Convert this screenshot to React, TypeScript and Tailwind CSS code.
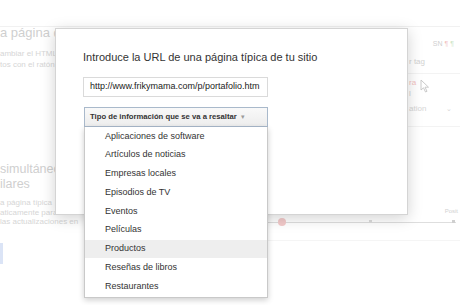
const options = [
  "Aplicaciones de software",
  "Artículos de noticias",
  "Empresas locales",
  "Episodios de TV",
  "Eventos",
  "Películas",
  "Productos",
  "Reseñas de libros",
  "Restaurantes",
];

function Cursor() {
  return (
    <svg width="10" height="14" viewBox="0 0 10 14" className="ml-[4px] mt-[1px]">
      <path d="M1 1 L1 11 L3.5 8.8 L5.5 13 L7 12.3 L5 8.2 L8.5 8.2 Z" fill="#fff" stroke="#c4c4c4" strokeWidth="0.9" />
    </svg>
  );
}

function BackgroundPage() {
  return (
    <div className="flex flex-col h-full">
      <div className="h-[27px] border-b border-[#f1f1f1]" />
      <div className="flex flex-1">
        {/* left column of the page, faded behind the dialog (clipped at the dialog edge) */}
        <div className="w-[268px] shrink-0 flex flex-col whitespace-nowrap">
          <div className="w-[56px] overflow-hidden mt-[-2px] text-[13px] leading-[16px] text-[#cfcfcf]">a página de ejemplo</div>
          <div className="w-[56px] overflow-hidden mt-[7px] text-[8px] leading-[11px] text-[#d6d6d6]">
            <div>ambiar el HTML de la página</div>
            <div>tos con el ratón</div>
          </div>
          <div className="w-[84px] overflow-hidden mt-[92px] text-[12.5px] leading-[15px] text-[#cfcfcf]">
            <div>simultáneo</div>
            <div>ilares</div>
          </div>
          <div className="w-[84px] overflow-hidden mt-[6px] text-[8px] leading-[9.5px] text-[#d6d6d6]">
            <div>a página típica</div>
            <div>aticamente para</div>
            <div>las actualizaciones en</div>
          </div>
          <div className="mt-[16px] w-[3px] h-[21px] bg-[#dbe4f6]" />
        </div>

        {/* right part of the page */}
        <div className="flex-1 flex flex-col whitespace-nowrap">
          <div className="flex justify-end gap-[2px] pr-[6px] mt-[13px] text-[7px] leading-[8px]">
            <span className="text-[#cfcfcf]">SN</span>
            <span className="text-[#f2c4c4]">¶</span>
            <span className="text-[#cfe6c9]">¶</span>
          </div>
          <div className="flex justify-start ml-[141px] mt-[9px] text-[8px] leading-[10px] text-[#d2d2d2]">r tag</div>
          <div className="mt-[6px] border-t border-[#f3f3f3]" />
          <div className="flex ml-[141px] mt-[4px]">
            <span className="text-[8px] leading-[10px] text-[#f2c2c2]">ra</span>
            <Cursor />
          </div>
          <div className="ml-[141px] mt-[-4px] text-[8px] leading-[10px] text-[#d2d2d2]">l</div>
          <div className="flex items-center justify-between ml-[141px] pr-[8px] mt-[5px] text-[8px] leading-[10px] text-[#d6d6d6]">
            <span>ation</span>
            <span className="text-[7px]">⌄</span>
          </div>
          <div className="mt-[12px] border-t border-[#f3f3f3]" />
          <div className="flex justify-end pr-[2px] mt-[81px] text-[6px] leading-[7px] text-[#d2d2d2]">Posit</div>
          <div className="relative mt-[3px] h-[8px] flex items-center">
            <div className="flex-1 h-[1px] bg-[#dedede] mr-[4px]" />
            <div className="absolute left-[10px] top-0 w-[8px] h-[8px] rounded-full bg-[#f3caca]" />
            <div className="absolute left-[101px] top-[2px] w-[3px] h-[3px] bg-[#dcdcdc]" />
            <div className="absolute right-[5px] top-[2px] w-[3px] h-[3px] bg-[#cfcfcf]" />
          </div>
          <div className="mt-[14px] border-t border-[#f5f5f5]" />
        </div>
      </div>
    </div>
  );
}

export default function App() {
  return (
    <div className="relative w-[460px] h-[305px] overflow-hidden bg-white font-['Liberation_Sans',Arial,sans-serif]">
      <BackgroundPage />

      {/* dialog */}
      <div className="absolute left-[55px] top-[28px] w-[353px] h-[187px] bg-white border border-[#d4d4d4] shadow-[0_3px_14px_rgba(0,0,0,0.18)]">
        <div className="pl-[27px] pt-[21px]">
          <div className="text-[11px] leading-[14px] text-[#333] whitespace-nowrap">
            Introduce la URL de una página típica de tu sitio
          </div>
          <div className="mt-[13px] w-[185px] h-[20px] border border-[#dadada] flex items-center pl-[6px] text-[9px] text-[#222] whitespace-nowrap overflow-hidden">
            http://www.frikymama.com/p/portafolio.htm
          </div>
          <div className="relative mt-[10px] ml-[1px] w-[184px]">
            <div className="h-[20px] border border-[#a9b9cb] bg-gradient-to-b from-[#f9f9f9] to-[#ededed] flex items-center pl-[5px] text-[7.7px] font-bold text-[#333] whitespace-nowrap">
              Tipo de información que se va a resaltar
              <span className="ml-[4px] text-[7px] text-[#9a9a9a] font-normal">▾</span>
            </div>

            {/* open list */}
            <div className="absolute left-0 top-full w-[184px] bg-white border border-[#c9c9c9] border-t-0 shadow-[0_2px_6px_rgba(0,0,0,0.2)] pb-[1px]">
              {options.map((opt) => (
                <div
                  key={opt}
                  className={
                    "h-[18.75px] flex items-center pl-[20px] text-[9px] text-[#333] whitespace-nowrap " +
                    (opt === "Productos" ? "bg-[#eeeeee]" : "")
                  }
                >
                  {opt}
                </div>
              ))}
            </div>
          </div>
        </div>
      </div>
    </div>
  );
}
